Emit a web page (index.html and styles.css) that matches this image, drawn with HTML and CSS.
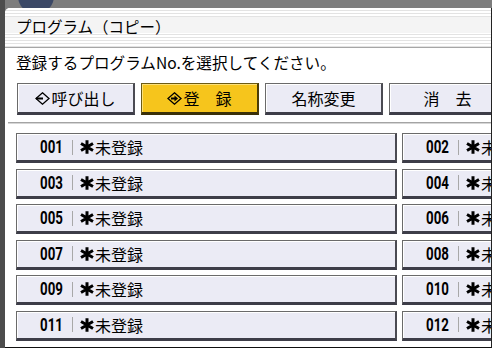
FILE: index.html
```html
<!DOCTYPE html>
<html lang="ja">
<head>
<meta charset="utf-8">
<title>プログラム（コピー）</title>
<link rel="stylesheet" href="styles.css">
</head>
<body>
<div class="screen">
  <div class="orb"></div>
  <div class="panel">
    <div class="title">プログラム（コピー）</div>
    <div class="prompt">登録するプログラムNo.を選択してください。</div>
    <div class="actions">
      <button class="btn">
        <svg class="ico" width="15" height="13" viewBox="0 0 15 13"><path d="M7.5 0.8 L14 6.5 L7.5 12.2 L1 6.5 Z" fill="none" stroke="#000" stroke-width="1.3"/><path d="M1 6.5 H8" stroke="#000" stroke-width="2"/></svg>呼び出し
      </button>
      <button class="btn btn-on">
        <svg class="ico" width="15" height="13" viewBox="0 0 15 13"><path d="M7.5 0.8 L14 6.5 L7.5 12.2 L1 6.5 Z" fill="none" stroke="#000" stroke-width="1.3"/><path d="M4 6.5 H8" stroke="#000" stroke-width="2"/><path d="M7.5 3.5 L11 6.5 L7.5 9.5 Z" fill="#000"/></svg>登　録
      </button>
      <button class="btn">名称変更</button>
      <button class="btn">消　去</button>
    </div>
    <div class="sep"></div>
    <div class="list">
      <button class="row"><span class="num">001</span><span class="bar"></span><svg class="ast" width="14" height="14" viewBox="0 0 14 14"><path d="M7 0.3 V13.7 M1 3.5 L13 10.5 M1 10.5 L13 3.5" stroke="#000" stroke-width="3"/></svg><span class="lbl">未登録</span></button>
      <button class="row"><span class="num">002</span><span class="bar"></span><svg class="ast" width="14" height="14" viewBox="0 0 14 14"><path d="M7 0.3 V13.7 M1 3.5 L13 10.5 M1 10.5 L13 3.5" stroke="#000" stroke-width="3"/></svg><span class="lbl">未登録</span></button>
      <button class="row"><span class="num">003</span><span class="bar"></span><svg class="ast" width="14" height="14" viewBox="0 0 14 14"><path d="M7 0.3 V13.7 M1 3.5 L13 10.5 M1 10.5 L13 3.5" stroke="#000" stroke-width="3"/></svg><span class="lbl">未登録</span></button>
      <button class="row"><span class="num">004</span><span class="bar"></span><svg class="ast" width="14" height="14" viewBox="0 0 14 14"><path d="M7 0.3 V13.7 M1 3.5 L13 10.5 M1 10.5 L13 3.5" stroke="#000" stroke-width="3"/></svg><span class="lbl">未登録</span></button>
      <button class="row"><span class="num">005</span><span class="bar"></span><svg class="ast" width="14" height="14" viewBox="0 0 14 14"><path d="M7 0.3 V13.7 M1 3.5 L13 10.5 M1 10.5 L13 3.5" stroke="#000" stroke-width="3"/></svg><span class="lbl">未登録</span></button>
      <button class="row"><span class="num">006</span><span class="bar"></span><svg class="ast" width="14" height="14" viewBox="0 0 14 14"><path d="M7 0.3 V13.7 M1 3.5 L13 10.5 M1 10.5 L13 3.5" stroke="#000" stroke-width="3"/></svg><span class="lbl">未登録</span></button>
      <button class="row"><span class="num">007</span><span class="bar"></span><svg class="ast" width="14" height="14" viewBox="0 0 14 14"><path d="M7 0.3 V13.7 M1 3.5 L13 10.5 M1 10.5 L13 3.5" stroke="#000" stroke-width="3"/></svg><span class="lbl">未登録</span></button>
      <button class="row"><span class="num">008</span><span class="bar"></span><svg class="ast" width="14" height="14" viewBox="0 0 14 14"><path d="M7 0.3 V13.7 M1 3.5 L13 10.5 M1 10.5 L13 3.5" stroke="#000" stroke-width="3"/></svg><span class="lbl">未登録</span></button>
      <button class="row"><span class="num">009</span><span class="bar"></span><svg class="ast" width="14" height="14" viewBox="0 0 14 14"><path d="M7 0.3 V13.7 M1 3.5 L13 10.5 M1 10.5 L13 3.5" stroke="#000" stroke-width="3"/></svg><span class="lbl">未登録</span></button>
      <button class="row"><span class="num">010</span><span class="bar"></span><svg class="ast" width="14" height="14" viewBox="0 0 14 14"><path d="M7 0.3 V13.7 M1 3.5 L13 10.5 M1 10.5 L13 3.5" stroke="#000" stroke-width="3"/></svg><span class="lbl">未登録</span></button>
      <button class="row"><span class="num">011</span><span class="bar"></span><svg class="ast" width="14" height="14" viewBox="0 0 14 14"><path d="M7 0.3 V13.7 M1 3.5 L13 10.5 M1 10.5 L13 3.5" stroke="#000" stroke-width="3"/></svg><span class="lbl">未登録</span></button>
      <button class="row"><span class="num">012</span><span class="bar"></span><svg class="ast" width="14" height="14" viewBox="0 0 14 14"><path d="M7 0.3 V13.7 M1 3.5 L13 10.5 M1 10.5 L13 3.5" stroke="#000" stroke-width="3"/></svg><span class="lbl">未登録</span></button>
    </div>
  </div>
</div>
</body>
</html>
```
FILE: styles.css
```css
* { box-sizing: border-box; }
html, body { margin: 0; padding: 0; }
body {
  width: 492px;
  height: 348px;
  overflow: hidden;
  background: linear-gradient(to right, #4c4c4c 0 5px, #7d7d7d 5px);
  font-family: "Noto Sans CJK JP", "Noto Sans", sans-serif;
  color: #000;
}
.screen {
  position: relative;
  padding: 8px 0 0 5px;
  height: 348px;
}
.orb {
  position: absolute;
  left: 18px;
  top: -22px;
  width: 36px;
  height: 36px;
  border-radius: 50%;
  background: #3b4866;
}
.panel {
  position: relative;
  width: 487px;
  height: 340px;
  background: #fff;
  border-top-left-radius: 5px;
  border-right: 1px solid #222;
  border-bottom: 1px solid #111;
  overflow: hidden;
}
.title {
  height: 40px;
  padding-left: 11px;
  font-size: 15.5px;
  line-height: 36px;
  border-bottom: 1px solid #a6a6a6;
  background:
    linear-gradient(to bottom, transparent 9px, #f4f4f4 9px, #f4f4f4 25px, transparent 25px),
    repeating-linear-gradient(to bottom, #ffffff 0 2px, #e3e3e3 2px 3px);
}
.prompt {
  height: 28px;
  padding-left: 11px;
  font-size: 15.6px;
  line-height: 28px;
}
.actions {
  display: flex;
  gap: 6px;
  margin-top: 7px;
  padding-left: 12px;
}
.btn {
  flex: 0 0 118px;
  height: 32px;
  display: flex;
  align-items: center;
  justify-content: center;
  padding: 0;
  font-family: "Noto Sans CJK JP", "Noto Sans", sans-serif;
  font-size: 16px;
  color: #000;
  background: #ebebf5;
  border: 1px solid #6a6a6a;
  border-right: 2px solid #4a4a52;
  border-bottom: 3px solid #3d3d48;
  box-shadow: inset 1px 1px 0 #ffffff;
}
.btn-on {
  background: #f6c51c;
  border-color: #6b5a14;
  border-right-color: #4a3c08;
  border-bottom-color: #3a3008;
  box-shadow: inset 1px 1px 0 #fbe07a;
}
.ico { flex: none; margin-right: 1px; }
.sep {
  margin: 7px 0 0 3px;
  height: 2px;
  border-top: 1px solid #a4a4a4;
  border-bottom: 1px solid #d6d6d6;
}
.list {
  display: grid;
  grid-template-columns: 381px 381px;
  column-gap: 5px;
  row-gap: 5.6px;
  margin-top: 9px;
  padding-left: 11px;
}
.row {
  height: 30px;
  display: flex;
  align-items: center;
  padding: 0;
  text-align: left;
  color: #000;
  background: #ebebf5;
  border: 1px solid #6a6a6a;
  border-right: 2px solid #4a4a52;
  border-bottom: 3px solid #3d3d48;
  box-shadow: inset 1px 1px 0 #ffffff;
}
.num {
  flex: 0 0 46px;
  text-align: right;
  font-family: Roboto, "DejaVu Sans", sans-serif;
  font-weight: bold;
  font-size: 19px;
  line-height: 20px;
  transform: scaleX(0.7);
  transform-origin: right center;
}
.bar {
  flex: none;
  width: 1px;
  height: 15px;
  margin-left: 9px;
  background: #a8a8a8;
}
.ast { margin-left: 7px; flex: none; }
.lbl {
  margin-left: 1px;
  font-family: "Noto Sans CJK JP", "Noto Sans", sans-serif;
  font-size: 16px;
  line-height: 20px;
}
```
